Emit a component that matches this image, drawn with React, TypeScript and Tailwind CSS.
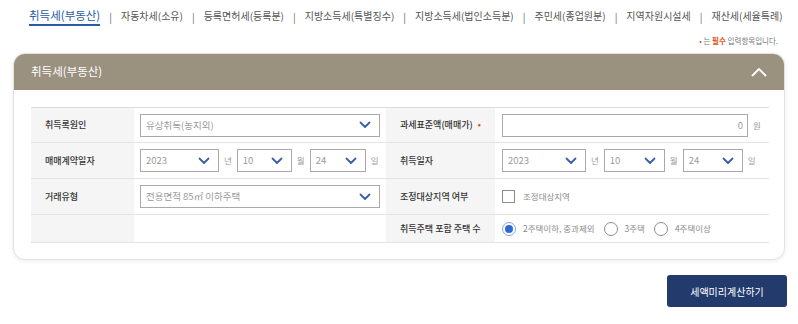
import { ReactNode } from 'react';

const tabs = [
    '취득세(부동산)',
    '자동차세(소유)',
    '등록면허세(등록분)',
    '지방소득세(특별징수)',
    '지방소득세(법인소득분)',
    '주민세(종업원분)',
    '지역자원시설세',
    '재산세(세율특례)',
];

const Chevron = () => (
    <svg width="12" height="8" viewBox="0 0 12 8" fill="none" className="shrink-0">
        <path d="M1.5 1.5L6 6L10.5 1.5" stroke="#3c5fa3" strokeWidth="1.8" strokeLinecap="round" strokeLinejoin="round" />
    </svg>
);

const Select = ({ value, w }: { value: string; w: string }) => (
    <div className={`${w} h-[23px] border border-[#a9a9a9] bg-white flex items-center justify-between pl-[5px] pr-[8px]`}>
        <span className="text-[9.5px] text-[#9a9a9a] whitespace-nowrap">{value}</span>
        <Chevron />
    </div>
);

const Unit = ({ children }: { children: ReactNode }) => (
    <span className="text-[8.5px] text-[#9a9a9a] mx-[5px]">{children}</span>
);

const Label = ({ children }: { children: ReactNode }) => (
    <div className="bg-[#f5f5f5] flex items-center pl-[14px] text-[9px] font-medium text-[#333] border-b border-[#e3e3e3] whitespace-nowrap">
        {children}
    </div>
);

const Cell = ({ children, pad = 'pl-[6px]' }: { children?: ReactNode; pad?: string }) => (
    <div className={`flex items-center ${pad} border-b border-[#e3e3e3]`}>{children}</div>
);

const Radio = ({ checked, label }: { checked?: boolean; label: string }) => (
    <label className="flex items-center mr-[9px]">
        <span
            className={`w-[14px] h-[14px] rounded-full border flex items-center justify-center bg-white ${
                checked ? 'border-[#8aa6d6]' : 'border-[#8c8c8c]'
            }`}
        >
            {checked && <span className="w-[8px] h-[8px] rounded-full bg-[#2f6ad0]" />}
        </span>
        <span className="ml-[7px] text-[8.5px] text-[#8a8a8a] whitespace-nowrap">{label}</span>
    </label>
);

const App = () => {
    return (
        <div className="w-[798px] h-[324px] bg-white font-['Noto_Sans_CJK_KR',sans-serif] overflow-hidden">
            <nav className="flex items-center pl-[29px] pt-[7px] h-[26px] whitespace-nowrap">
                {tabs.map((t, i) => (
                    <div key={t} className="flex items-center shrink-0">
                        {i > 0 && <span className="text-[10px] text-[#666] mx-[9px] leading-[17px]">|</span>}
                        <span
                            className={
                                i === 0
                                    ? 'text-[11.5px] text-[#2b5aa8] border-b-2 border-[#2b5aa8] leading-[17px]'
                                    : 'text-[10px] text-[#555] leading-[17px] border-b-2 border-transparent'
                            }
                        >
                            {t}
                        </span>
                    </div>
                ))}
            </nav>

            <p className="text-right pr-[20px] mt-[10px] text-[7.5px] text-[#777] leading-[10px]">
                <span className="text-[#e0521c]">•</span> 는 <span className="text-[#e0521c] font-bold">필수</span> 입력항목입니다.
            </p>

            <section className="mx-[13px] mt-[7px] w-[772px] rounded-[12px] border border-[#e2e2e2] shadow-[0_1px_4px_rgba(0,0,0,0.08)] bg-white">
                <header className="h-[36px] bg-[#9b917f] rounded-t-[11px] flex items-center justify-between pl-[17px] pr-[17px]">
                    <h2 className="text-[11.5px] text-white">취득세(부동산)</h2>
                    <svg width="16" height="10" viewBox="0 0 16 10" fill="none">
                        <path d="M1.5 8.5L8 2L14.5 8.5" stroke="#fff" strokeWidth="1.8" strokeLinecap="round" strokeLinejoin="round" />
                    </svg>
                </header>

                <div className="pl-[17px] pr-[15px] pt-[17px] pb-[16px]">
                    <div className="grid grid-cols-[103px_252px_109px_274px] grid-rows-[35px_36px_36px_28px] border-t border-[#dcdcdc]">
                        <Label>취득록원인</Label>
                        <Cell>
                            <Select value="유상취득(농지외)" w="w-[240px]" />
                        </Cell>
                        <Label>
                            과세표준액(매매가)<span className="text-[#e0521c] ml-[5px]">•</span>
                        </Label>
                        <Cell pad="pl-[7px]">
                            <div className="w-[246px] h-[23px] border border-[#a9a9a9] flex items-center justify-end pr-[4px] text-[9.5px] text-[#9a9a9a]">
                                0
                            </div>
                            <Unit>원</Unit>
                        </Cell>

                        <Label>매매계약일자</Label>
                        <Cell>
                            <Select value="2023" w="w-[79px]" />
                            <Unit>년</Unit>
                            <Select value="10" w="w-[55px]" />
                            <Unit>월</Unit>
                            <Select value="24" w="w-[56px]" />
                            <Unit>일</Unit>
                        </Cell>
                        <Label>취득일자</Label>
                        <Cell pad="pl-[7px]">
                            <Select value="2023" w="w-[84px]" />
                            <Unit>년</Unit>
                            <Select value="10" w="w-[61px]" />
                            <Unit>월</Unit>
                            <Select value="24" w="w-[60px]" />
                            <Unit>일</Unit>
                        </Cell>

                        <Label>거래유형</Label>
                        <Cell>
                            <Select value="전용면적 85㎡ 이하주택" w="w-[240px]" />
                        </Cell>
                        <Label>조정대상지역 여부</Label>
                        <Cell pad="pl-[7px]">
                            <span className="w-[13px] h-[13px] border border-[#8c8c8c] bg-white" />
                            <span className="ml-[8px] text-[8.5px] text-[#8a8a8a]">조정대상지역</span>
                        </Cell>

                        <Label>{''}</Label>
                        <Cell />
                        <Label>취득주택 포함 주택 수</Label>
                        <Cell pad="pl-[7px]">
                            <Radio checked label="2주택이하, 중과제외" />
                            <Radio label="3주택" />
                            <Radio label="4주택이상" />
                        </Cell>
                    </div>
                </div>
            </section>

            <div className="flex justify-end pr-[11px] mt-[15px]">
                <button className="w-[120px] h-[32px] bg-[#223a6c] rounded-[3px] text-white text-[10px]">
                    세액미리계산하기
                </button>
            </div>
        </div>
    );
};

export default App;
